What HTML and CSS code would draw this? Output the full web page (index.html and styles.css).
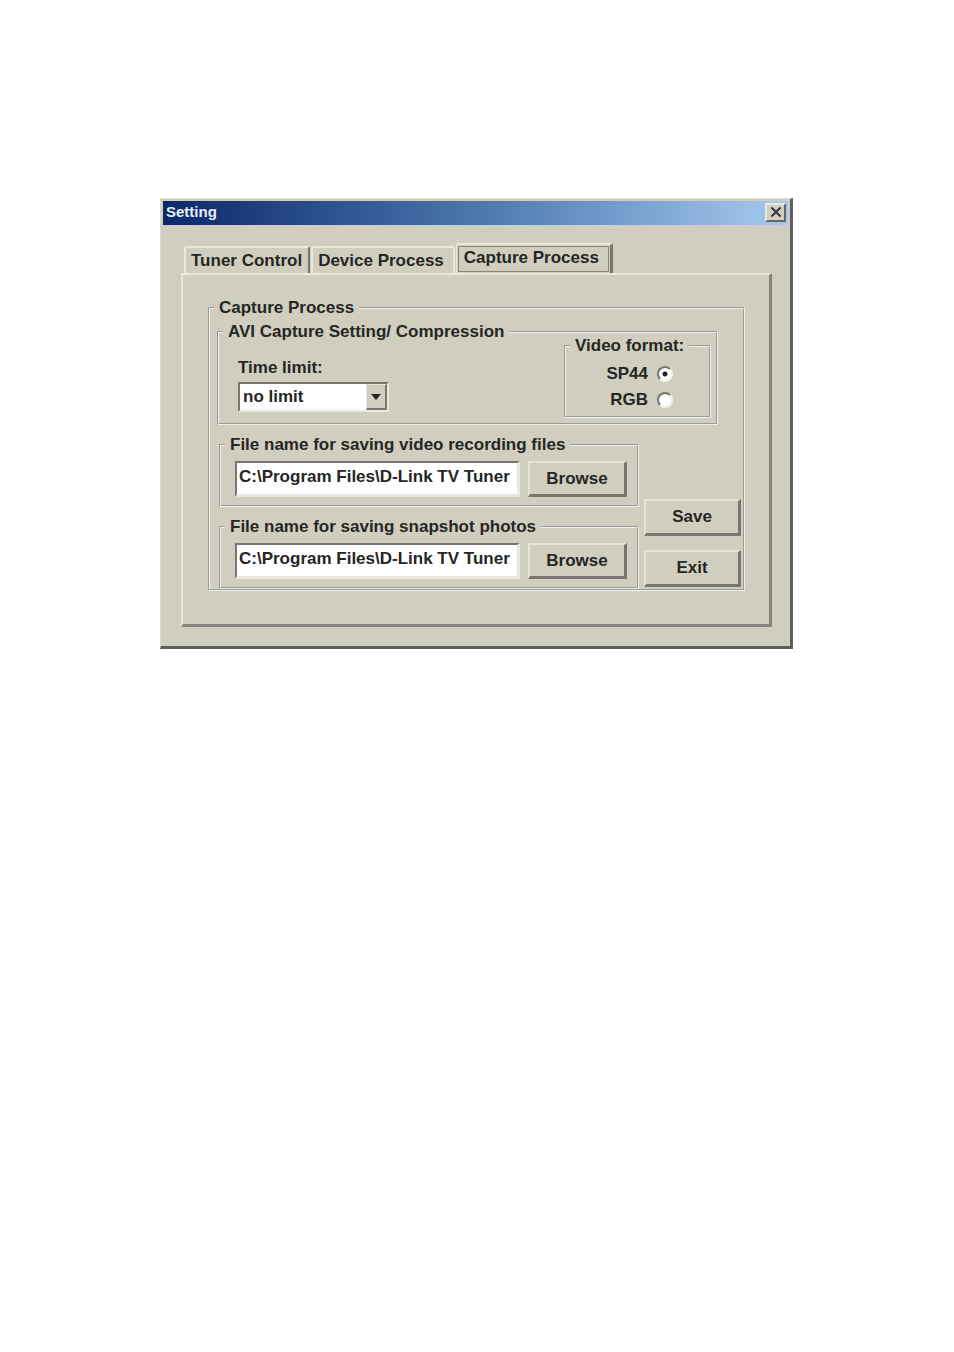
FILE: index.html
```html
<!DOCTYPE html>
<html lang="en">
<head>
<meta charset="utf-8">
<title>Setting</title>
<link rel="stylesheet" href="styles.css">
</head>
<body>
<main class="page">
  <section class="window" aria-labelledby="window-title">
    <header class="titlebar">
      <h1 class="title" id="window-title">Setting</h1>
      <button class="close" type="button" aria-label="Close">
        <svg viewBox="0 0 12 12" width="12" height="12" aria-hidden="true"><path d="M1.5 1.5 10.5 10.5M10.5 1.5 1.5 10.5" stroke="#333" stroke-width="2" fill="none"/></svg>
      </button>
    </header>
    <div class="body">
      <div class="tabs" role="tablist">
        <button class="tab" type="button" role="tab" aria-selected="false">Tuner Control</button>
        <button class="tab tab-wide" type="button" role="tab" aria-selected="false">Device Process</button>
        <button class="tab tab-active" type="button" role="tab" aria-selected="true"><span class="tab-focus">Capture Process</span></button>
      </div>
      <form class="panel">
        <fieldset class="group">
          <legend>Capture Process</legend>
          <div class="capture">
            <fieldset class="group avi">
              <legend>AVI Capture Setting/ Compression</legend>
              <div class="avi-row">
                <div class="limit">
                  <label for="limit">Time limit:</label>
                  <div class="select-box">
                    <select id="limit"><option>no limit</option></select>
                    <span class="arrow"><svg viewBox="0 0 10 6" width="10" height="6" aria-hidden="true"><path d="M0 0H10L5 6Z" fill="#222"/></svg></span>
                  </div>
                </div>
                <fieldset class="group format">
                  <legend>Video format:</legend>
                  <div class="options">
                    <label class="option">SP44 <input type="radio" name="format" checked></label>
                    <label class="option">RGB <input type="radio" name="format"></label>
                  </div>
                </fieldset>
              </div>
            </fieldset>
            <div class="lower">
              <div class="files">
                <fieldset class="group">
                  <legend>File name for saving video recording files</legend>
                  <div class="file-row">
                    <input class="path" type="text" aria-label="Video recording file name" value="C:\Program Files\D-Link TV Tuner">
                    <button class="button" type="button">Browse</button>
                  </div>
                </fieldset>
                <fieldset class="group">
                  <legend>File name for saving snapshot photos</legend>
                  <div class="file-row">
                    <input class="path" type="text" aria-label="Snapshot photo file name" value="C:\Program Files\D-Link TV Tuner">
                    <button class="button" type="button">Browse</button>
                  </div>
                </fieldset>
              </div>
              <div class="actions">
                <button class="button" type="button">Save</button>
                <button class="button" type="button">Exit</button>
              </div>
            </div>
          </div>
        </fieldset>
      </form>
    </div>
  </section>
</main>
</body>
</html>
```

FILE: styles.css
```css
* { box-sizing: border-box; }

body {
  margin: 0;
  background: #fff;
  color: #262624;
  font: bold 17px/20px "Liberation Sans", Arial, sans-serif;
}

button, input, select { font: inherit; color: inherit; }

.page { padding: 198px 161px 40px 160px; }

.window {
  background: #d0cfbf;
  border: solid;
  border-width: 1px 3px 3px 1px;
  border-color: #dcdccf #5c5e5f #5c5e5f #dcdccf;
  padding: 2px;
}

.titlebar {
  display: flex;
  align-items: center;
  justify-content: space-between;
  height: 24px;
  padding: 0 2px 2px 3px;
  background: linear-gradient(90deg, #0a286b, #4f79b0 52%, #a6caf0);
}

.title { margin: 0; color: #e9edf5; font-size: 15px; line-height: 20px; }

.close {
  display: flex;
  align-items: center;
  justify-content: center;
  width: 21px;
  height: 19px;
  padding: 0;
  background: #d0cfbf;
  border: 2px solid;
  border-color: #e8e8de #66665f #66665f #e8e8de;
}

.body { padding: 18px 16px 17px 18px; }

.tabs { display: flex; align-items: flex-end; padding-left: 3px; }

.tab {
  height: 27px;
  padding: 1px 6px 0 5px;
  background: #d0cfbf;
  border: solid;
  border-width: 2px 2px 0 2px;
  border-color: #e8e8de #77776f #e8e8de #e8e8de;
  border-radius: 3px 2px 0 0;
  white-space: nowrap;
}

.tab + .tab { margin-left: 1px; border-right-color: #e8e8de; }

.tab-wide { padding-right: 9px; }

.tab.tab-active {
  height: 30px;
  padding: 1px;
  border-width: 2px 3px 0 1px;
  border-right-color: #77776f;
}

.tab-focus {
  display: block;
  height: 26px;
  padding: 1px 9px 0 5px;
  border: 1px solid #85857b;
}

.panel {
  padding: 26px 24px 33px 25px;
  border: solid;
  border-width: 2px 3px 3px 2px;
  border-color: #e8e8de #85857d #85857d #e8e8de;
}

.group {
  min-width: 0;
  margin: 0;
  padding: 0;
  border: 2px groove #efefeb;
}

legend { margin-left: 4px; padding: 0 5px; line-height: 14px; }

.capture { padding: 10px 0 0 7px; }

.avi { margin-right: 25px; }

.avi-row {
  display: flex;
  justify-content: space-between;
  padding: 0 5px 5px 19px;
}

.limit { padding-top: 19px; }
.limit label { display: block; }

.select-box { position: relative; width: 151px; margin-top: 4px; }

.select-box select {
  display: block;
  appearance: none;
  width: 100%;
  height: 30px;
  padding: 0 24px 0 3px;
  background: #fff;
  border: 2px solid;
  border-color: #77776f #e8e8de #e8e8de #77776f;
  border-radius: 0;
}

.arrow {
  position: absolute;
  top: 2px;
  right: 2px;
  bottom: 2px;
  display: flex;
  align-items: center;
  justify-content: center;
  width: 21px;
  background: #d0cfbf;
  border: solid;
  border-width: 1px 2px 2px 1px;
  border-color: #e8e8de #77776f #77776f #e8e8de;
  pointer-events: none;
}

.format { width: 147px; }

.options {
  display: flex;
  flex-direction: column;
  gap: 6px;
  padding: 11px 36px 6px 0;
}

.option {
  display: flex;
  align-items: center;
  justify-content: flex-end;
  gap: 9px;
}

.option input {
  appearance: none;
  width: 16px;
  height: 16px;
  margin: 0;
  background: #fff;
  border: 2px solid;
  border-color: #77776f #f2f2ea #f2f2ea #77776f;
  border-radius: 50%;
}

.option input:checked { background: radial-gradient(circle, #222 2px, #fff 3px); }

.lower {
  display: flex;
  gap: 5px;
  padding: 13px 2px 0 2px;
}

.files {
  display: flex;
  flex: 1;
  flex-direction: column;
  gap: 13px;
  min-width: 0;
}

.file-row { display: flex; gap: 8px; padding: 9px 10px 8px 14px; }

.path {
  flex: 1;
  min-width: 0;
  height: 36px;
  padding: 0 2px 4px;
  background: #fff;
  border: solid;
  border-width: 2px 3px 3px 2px;
  border-color: #77776f #e8e8de #e8e8de #77776f;
}

.button {
  width: 99px;
  height: 37px;
  padding: 0;
  background: #d0cfbf;
  border: solid;
  border-width: 2px 3px 3px 2px;
  border-color: #e4e4d9 #77776f #77776f #e4e4d9;
}

.file-row .button { height: 36px; }

.actions {
  display: flex;
  flex-direction: column;
  justify-content: flex-end;
  gap: 14px;
  padding-bottom: 2px;
}

.actions .button { width: 97px; }
```
